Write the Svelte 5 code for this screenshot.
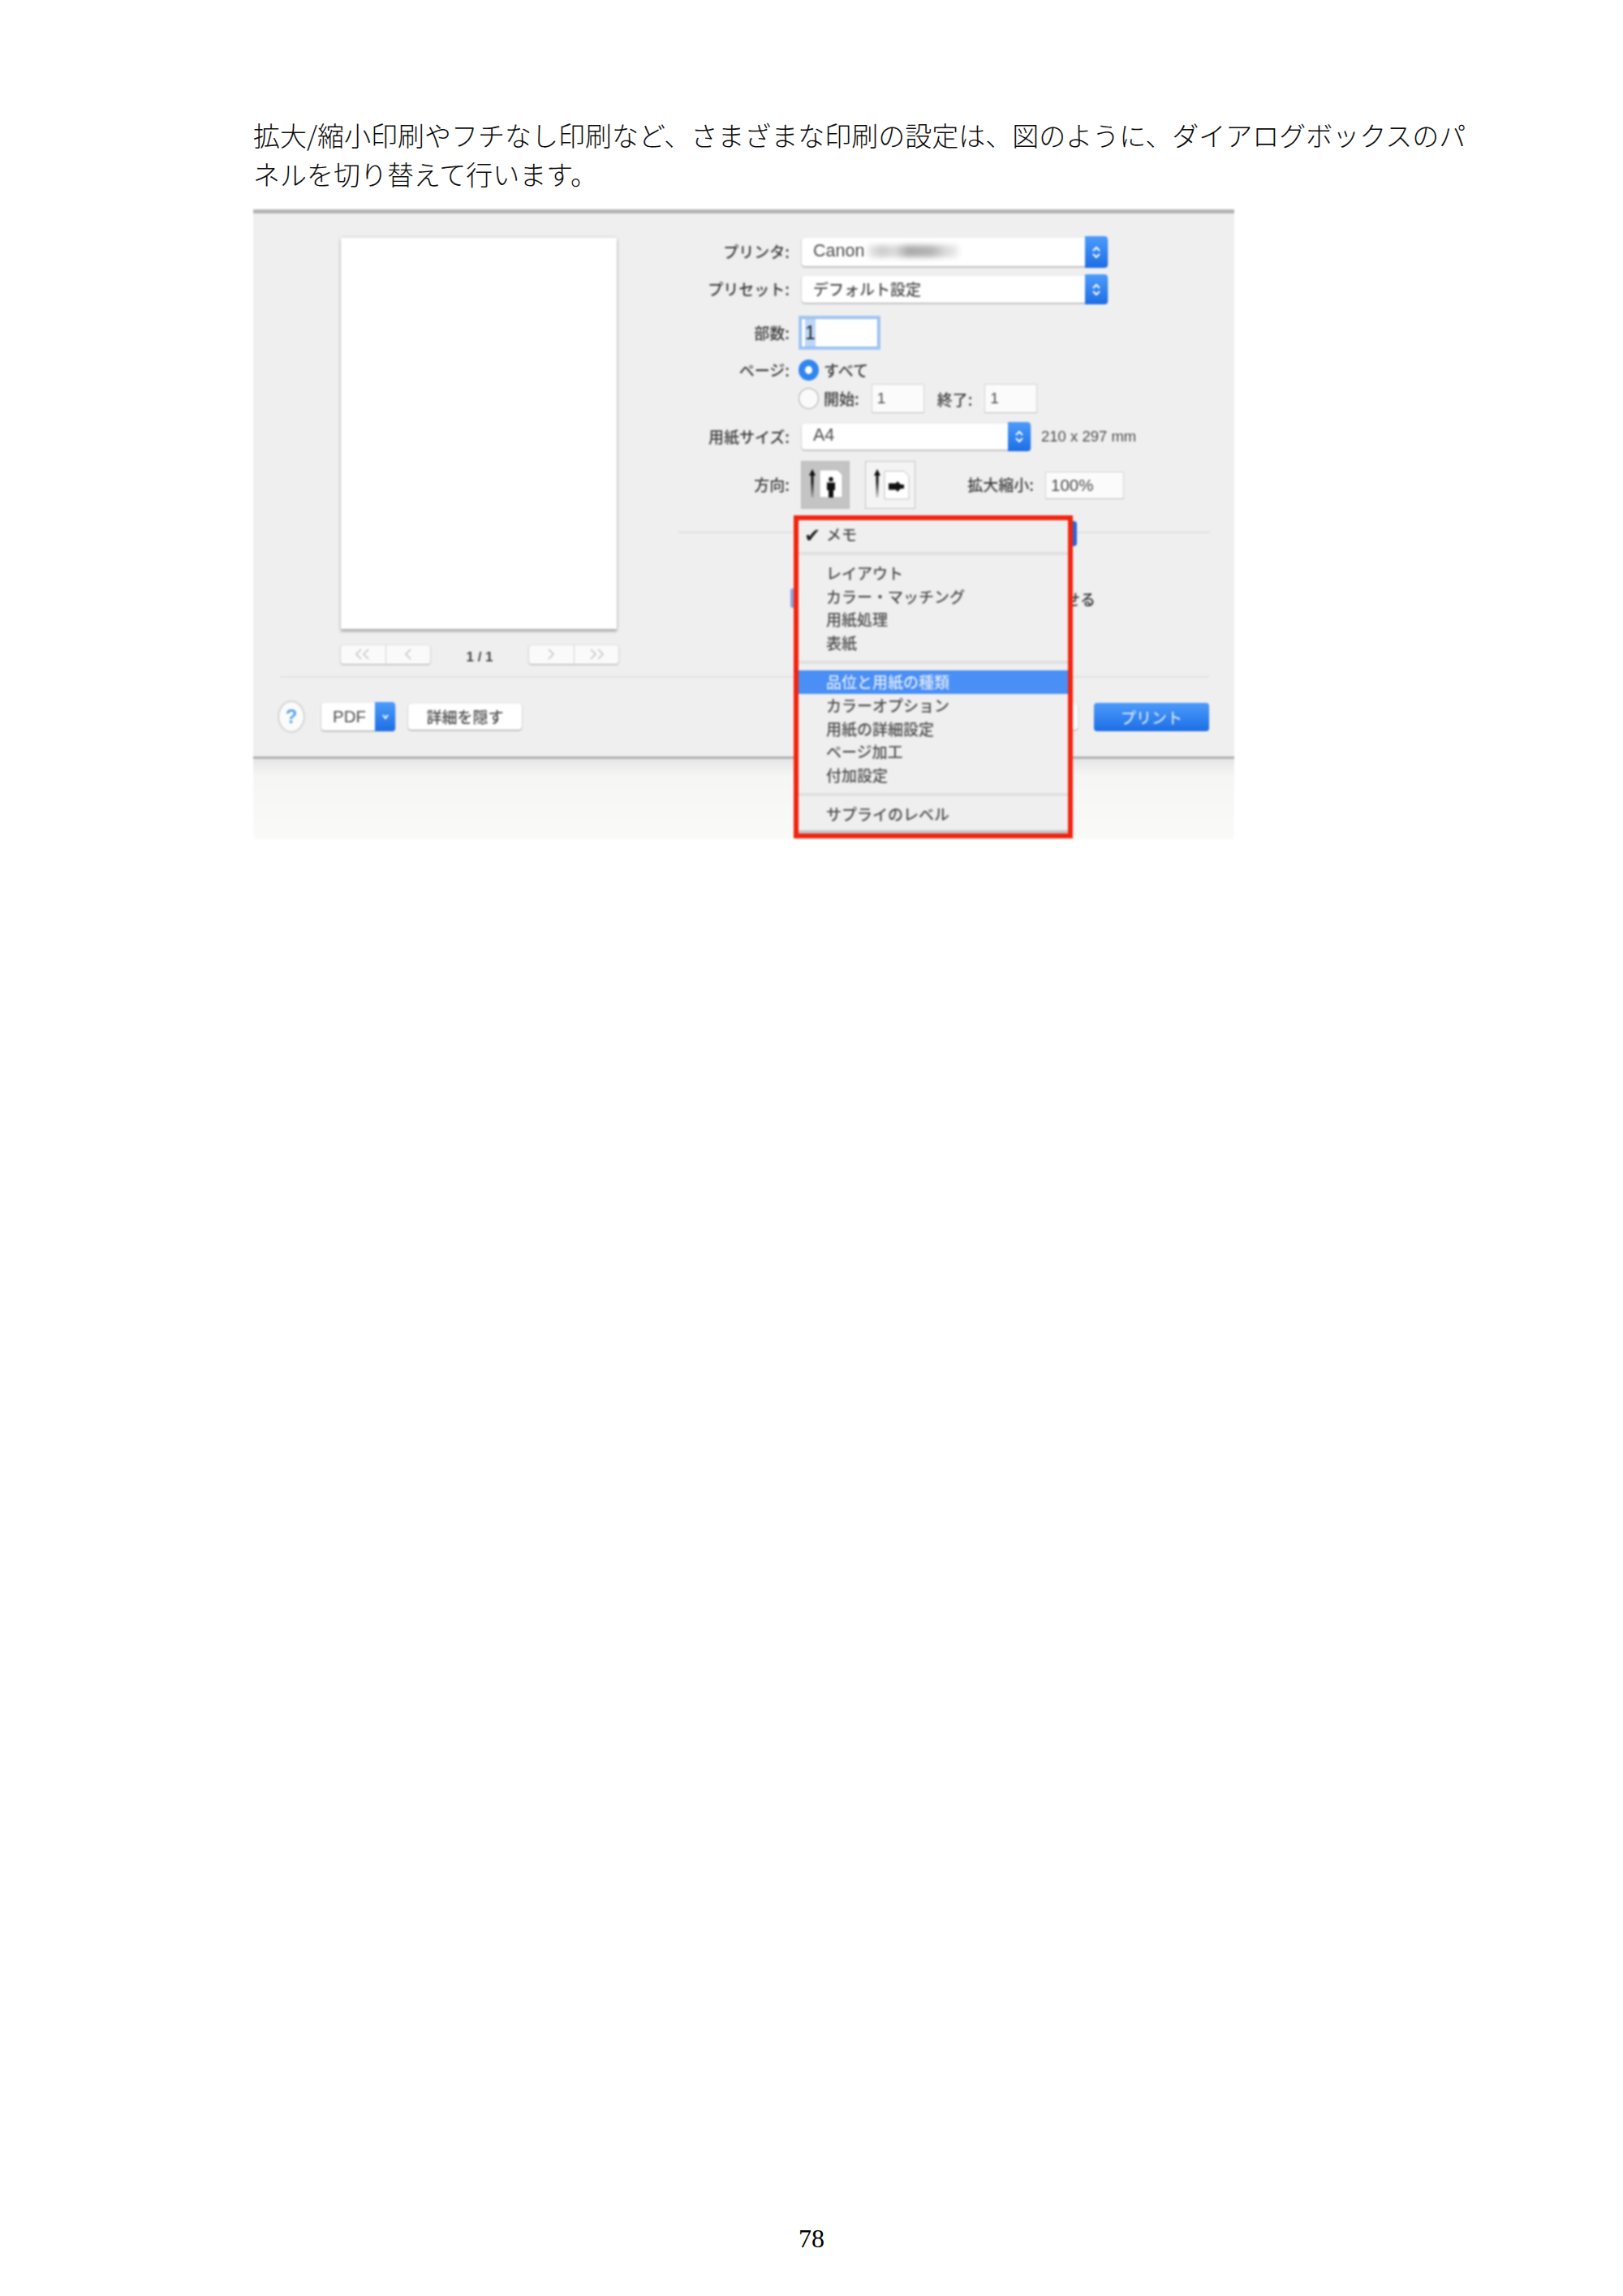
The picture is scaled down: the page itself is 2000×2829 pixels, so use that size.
<script>
  const groups = [
    ['レイアウト', 'カラー・マッチング', '用紙処理', '表紙'],
    ['品位と用紙の種類', 'カラーオプション', '用紙の詳細設定', 'ページ加工', '付加設定'],
    ['サプライのレベル']
  ];
  const selected = '品位と用紙の種類';
</script>

{#snippet stepper()}
  <span class="stepper">
    <svg width="12" height="20" viewBox="0 0 12 20" fill="none" stroke="#fff" stroke-width="2">
      <path d="M2 8 L6 4 L10 8" />
      <path d="M2 12 L6 16 L10 12" />
    </svg>
  </span>
{/snippet}

{#snippet chevrons(points)}
  <svg width="26" height="18" viewBox="0 0 26 18" fill="none" stroke="#c4c4c4" stroke-width="1.600">
    {#each points as d}
      <path {d} />
    {/each}
  </svg>
{/snippet}

{#snippet orientArrow()}
  <path d="M9 5 L13 13 L10.500 13 L10.500 40 L7.500 40 L7.500 13 L5 13 Z" fill="url(#fade)" />
{/snippet}

<div class="page">
  <p class="intro">拡大/縮小印刷やフチなし印刷など、さまざまな印刷の設定は、図のように、ダイアログボックスのパネルを切り替えて行います。</p>

  <div class="shot">
    <div class="dialog">
      <div class="body">
        <div class="preview">
          <div class="paper"></div>
          <div class="pager">
            <div class="seg">
              <span>{@render chevrons(['M11 3 L5 9 L11 15', 'M20 3 L14 9 L20 15'])}</span>
              <span>{@render chevrons(['M16 3 L10 9 L16 15'])}</span>
            </div>
            <span class="count">1 / 1</span>
            <div class="seg">
              <span>{@render chevrons(['M10 3 L16 9 L10 15'])}</span>
              <span>{@render chevrons(['M6 3 L12 9 L6 15', 'M15 3 L21 9 L15 15'])}</span>
            </div>
          </div>
        </div>

        <div class="form">
          <div class="row printer">
            <span class="label">プリンタ:</span>
            <div class="popup wide"><span class="latin">Canon</span><i class="smudge"></i>{@render stepper()}</div>
          </div>
          <div class="row preset">
            <span class="label">プリセット:</span>
            <div class="popup wide"><span>デフォルト設定</span>{@render stepper()}</div>
          </div>
          <div class="row copies">
            <span class="label">部数:</span>
            <div class="focus-field"><span class="picked">1</span></div>
          </div>
          <div class="row all">
            <span class="label">ページ:</span>
            <i class="radio on"></i><span class="opt">すべて</span>
          </div>
          <div class="row range">
            <span class="label"></span>
            <i class="radio"></i><span class="opt">開始:</span>
            <div class="field small from">1</div>
            <span class="opt to">終了:</span>
            <div class="field small">1</div>
          </div>
          <div class="row size">
            <span class="label">用紙サイズ:</span>
            <div class="popup medium"><span class="latin">A4</span>{@render stepper()}</div>
            <span class="dim">210 x 297 mm</span>
          </div>
          <div class="row orient">
            <span class="label">方向:</span>
            <div class="orient-btn active">
              <svg width="50" height="50" viewBox="0 0 50 50">
                <defs>
                  <linearGradient id="fade" x1="0" y1="0" x2="0" y2="1">
                    <stop offset="0.45" stop-color="#111" />
                    <stop offset="1" stop-color="#111" stop-opacity="0.15" />
                  </linearGradient>
                </defs>
                {@render orientArrow()}
                <path d="M18 6 H40 L46 12 V40 H18 Z" fill="#fff" stroke="#b8b8b8" />
                <circle cx="32" cy="17.500" r="2.800" fill="#111" />
                <path d="M27 21.500 H37 V31 H35 V40 H29 V31 H27 Z" fill="#111" />
              </svg>
            </div>
            <div class="orient-btn">
              <svg width="50" height="50" viewBox="0 0 50 50">
                {@render orientArrow()}
                <path d="M18 7.500 H42 L48 13.500 V42 H18 Z" fill="#fff" stroke="#c0c0c0" />
                <path d="M23 22.500 H32 L34 20 L38 24 H42 V29 H38 L34 33 L32 30.500 H23 Z" fill="#111" />
              </svg>
            </div>
            <span class="label scale">拡大縮小:</span>
            <div class="field percent">100%</div>
          </div>
          <div class="panel-head">
            <span class="panel-popup"></span>
          </div>
          <div class="panel-line">
            <i class="check"></i>
            <span>せる</span>
          </div>
        </div>
      </div>

      <div class="footer">
        <span class="help">?</span>
        <div class="pdf"><span>PDF</span><i>
          <svg width="10" height="8" viewBox="0 0 10 8" fill="none" stroke="#fff" stroke-width="2"><path d="M2 2 L5 6 L8 2" /></svg>
        </i></div>
        <div class="btn detail">詳細を隠す</div>
        <div class="btn cancel"></div>
        <div class="print">プリント</div>
      </div>
    </div>
    <div class="below"></div>

    <div class="menu">
      <div class="item"><span class="tick">✔</span>メモ</div>
      {#each groups as group}
        <div class="sep"></div>
        {#each group as name}
          <div class="item" class:sel={name === selected}>{name}</div>
        {/each}
      {/each}
    </div>
  </div>

  <div class="folio">78</div>
</div>

<style>
  :global(body) {
    margin: 0;
    background: #fff;
  }
  .page {
    width: 2000px;
    height: 2829px;
    display: flex;
    flex-direction: column;
    font-family: 'Noto Sans CJK JP', sans-serif;
    overflow: hidden;
  }
  .intro {
    margin: 142px 0 0 312px;
    width: 1500px;
    font-size: 33px;
    line-height: 48px;
    font-weight: 300;
    color: #0c0c0c;
  }
  .shot {
    position: relative;
    margin: 20px 0 0 312px;
    width: 1209px;
    height: 776px;
    filter: blur(0.8px);
    font-size: 19px;
    font-weight: 500;
    color: #3c3c3c;
  }
  .dialog {
    height: 677px;
    box-sizing: border-box;
    background: #efefef;
    border-top: 5px solid #b4b4b4;
    border-bottom: 3px solid #b0b0b0;
    display: flex;
    flex-direction: column;
  }
  .below {
    height: 99px;
    background: linear-gradient(#e6e6e6, #f6f6f5 22%, #fafaf9);
  }
  .body {
    height: 570px;
    flex: none;
    box-sizing: border-box;
    padding: 30px 0 0 108px;
    display: flex;
  }
  .preview {
    width: 342px;
    flex: none;
  }
  .paper {
    width: 340px;
    height: 482px;
    background: #fff;
    box-shadow: 0 3px 3px #aaa, 0 0 4px #ccc;
  }
  .pager {
    margin-top: 17px;
    display: flex;
    align-items: center;
    justify-content: space-between;
  }
  .seg {
    width: 110px;
    height: 23px;
    display: flex;
    background: #fafafa;
    border-radius: 3px;
    box-shadow: 0 1px 2px #aaa, 0 0 2px #ccc;
  }
  .seg span {
    flex: 1;
    display: flex;
    align-items: center;
    justify-content: center;
  }
  .seg span + span {
    border-left: 1px solid #d4d4d4;
  }
  .count {
    margin-top: 8px;
    font-size: 17px;
    font-weight: 700;
    font-family: 'Liberation Sans', sans-serif;
    color: #444;
  }
  .form {
    margin-left: 74px;
    width: 655px;
  }
  .row {
    display: flex;
    align-items: center;
  }
  .label {
    width: 137px;
    margin-right: 10px;
    margin-top: -2px;
    flex: none;
    text-align: right;
    line-height: 1;
  }
  .printer {
    height: 35px;
  }
  .preset {
    margin-top: 12px;
    height: 33px;
  }
  .copies {
    margin-top: 15px;
    height: 44px;
  }
  .all {
    margin-top: 11px;
    height: 26px;
  }
  .range {
    margin-top: 4px;
    height: 36px;
  }
  .size {
    margin-top: 13px;
    height: 32px;
  }
  .orient {
    margin-top: 14px;
    height: 59px;
  }
  .popup {
    position: relative;
    margin-left: 5px;
    height: 100%;
    box-sizing: border-box;
    background: #fff;
    border-radius: 4px;
    box-shadow: 0 1px 2px #999;
    padding: 0 0 3px 14px;
    display: flex;
    align-items: center;
    color: #4c4c4c;
  }
  .latin {
    font: 400 21.500px 'Liberation Sans', sans-serif;
  }
  .wide {
    width: 377px;
  }
  .medium {
    width: 282px;
  }
  .smudge {
    width: 112px;
    height: 15px;
    margin-left: 4px;
    background: linear-gradient(90deg, #eee, #ccc 15%, #dcdcdc 30%, #aaa 45%, #b4b4b4 70%, #d8d8d8 85%, #eee);
    filter: blur(3px);
  }
  .stepper {
    position: absolute;
    right: 0;
    top: -2px;
    bottom: -2px;
    width: 28px;
    background: linear-gradient(#4d9bfb, #1c6ee6);
    border-radius: 0 4px 4px 0;
    display: flex;
    align-items: center;
    justify-content: center;
  }
  .focus-field {
    width: 95px;
    height: 36px;
    box-sizing: border-box;
    margin-left: 4px;
    padding-left: 4px;
    background: #fff;
    border: 1px solid #8ab4ea;
    box-shadow: 0 0 0 3px #a2c8f4;
    color: #222;
    font: 400 23px/34px 'Liberation Sans', sans-serif;
  }
  .picked {
    display: inline-block;
    background: #bcd6f7;
  }
  .radio {
    width: 25px;
    height: 26px;
    margin-left: 1px;
    box-sizing: border-box;
    flex: none;
    border-radius: 50%;
    background: #fafafa;
    border: 1.500px solid #aaa;
  }
  .radio.on {
    border: 8px solid #2f86f2;
    background: #fff;
  }
  .opt {
    margin-top: -1px;
    margin-left: 6px;
  }
  .from {
    margin-left: 15px;
  }
  .to {
    margin: 0 15px 0 16px;
  }
  .field {
    height: 36px;
    box-sizing: border-box;
    background: #fbfbfb;
    border: 1px solid #d4d4d4;
    border-bottom-color: #bbb;
    padding-left: 6px;
    font: 400 19px/34px 'Liberation Sans', sans-serif;
    color: #4c4c4c;
  }
  .small {
    width: 65px;
  }
  .dim {
    margin-left: 13px;
    font: 400 18.500px 'Liberation Sans', sans-serif;
    color: #4c4c4c;
  }
  .orient-btn {
    width: 60px;
    height: 59px;
    box-sizing: border-box;
    margin-left: 4px;
    background: #f4f4f4;
    border: 1px solid #c4c4c4;
    display: flex;
    align-items: center;
    justify-content: center;
  }
  .orient-btn.active {
    background: #c4c4c4;
    border-color: #bbb;
  }
  .orient-btn + .orient-btn {
    margin-left: 19px;
    width: 62px;
  }
  .scale {
    width: auto;
    margin: -2px 14px 0 auto;
  }
  .percent {
    width: 97px;
    height: 34px;
    margin-right: 106px;
    font-size: 20.500px;
    line-height: 32px;
    padding-left: 6px;
  }
  .panel-head {
    position: relative;
    height: 31px;
    margin-top: 15px;
  }
  .panel-head::before {
    content: '';
    position: absolute;
    left: 0;
    right: 0;
    top: 13px;
    height: 2px;
    background: #e0e0e0;
  }
  .panel-popup {
    position: absolute;
    left: 478px;
    top: 0;
    width: 13px;
    height: 31px;
    background: #2b64d8;
    border-radius: 0 4px 4px 0;
  }
  .panel-line {
    display: flex;
    align-items: center;
    justify-content: space-between;
    width: 514px;
    margin-top: 51px;
    height: 26px;
    color: #333;
  }
  .check {
    margin-left: 138px;
    width: 8px;
    height: 24px;
    background: #8aa4e0;
    border-radius: 3px 0 0 3px;
  }
  .footer {
    flex: 1;
    margin: 0 31px 0 33px;
    border-top: 2px solid #e2e2e2;
    display: flex;
    align-items: center;
    padding-bottom: 1px;
  }
  .help {
    width: 30px;
    height: 36px;
    box-sizing: border-box;
    margin-left: -1px;
    border-radius: 50%;
    background: #fbfbfb;
    box-shadow: 0 0 3px #888;
    text-align: center;
    font: 700 24px/36px 'Liberation Sans', sans-serif;
    color: #5ba6e8;
  }
  .pdf {
    margin-left: 22px;
    width: 91px;
    height: 34px;
    position: relative;
    background: #fff;
    border-radius: 4px;
    box-shadow: 0 1px 2px #999;
    font: 400 20.500px/34px 'Liberation Sans', sans-serif;
    color: #4c4c4c;
    padding-left: 14px;
    box-sizing: border-box;
  }
  .pdf i {
    position: absolute;
    right: 0;
    top: -1px;
    bottom: -1px;
    width: 25px;
    border-radius: 0 4px 4px 0;
    background: linear-gradient(#4d9bfb, #1c6ee6);
    display: flex;
    align-items: center;
    justify-content: center;
  }
  .btn {
    height: 32px;
    background: #fff;
    border-radius: 4px;
    box-shadow: 0 1px 2px #999;
    text-align: center;
    line-height: 32px;
    color: #4c4c4c;
  }
  .detail {
    margin-left: 16px;
    width: 140px;
  }
  .cancel {
    margin-left: auto;
    width: 100px;
  }
  .print {
    margin-left: 20px;
    width: 142px;
    height: 35px;
    background: linear-gradient(#4d9bfb, #1c6ee6);
    border-radius: 4px;
    text-align: center;
    line-height: 35px;
    color: #cfe2fb;
  }
  .menu {
    position: absolute;
    left: 666px;
    top: 377px;
    width: 344px;
    height: 398px;
    box-sizing: border-box;
    padding-top: 3px;
    background: #efefef;
    border: 6px solid #f4220e;
    box-shadow: inset 0 -4px 0 #c4c4c4;
    color: #4e4e4e;
  }
  .item {
    position: relative;
    height: 28.800px;
    line-height: 28.800px;
    padding-left: 34px;
  }
  .item.sel {
    background: #4a8ff5;
    color: #dfeafc;
  }
  .tick {
    position: absolute;
    left: 7px;
    font-size: 24px;
    color: #222;
  }
  .sep {
    height: 4px;
    margin: 7px 0 8px;
    background: #e0e0e0;
  }
  .folio {
    margin-top: auto;
    margin-bottom: 52px;
    text-align: center;
    font: 32px/38px 'Liberation Serif', serif;
    color: #000;
  }
</style>
